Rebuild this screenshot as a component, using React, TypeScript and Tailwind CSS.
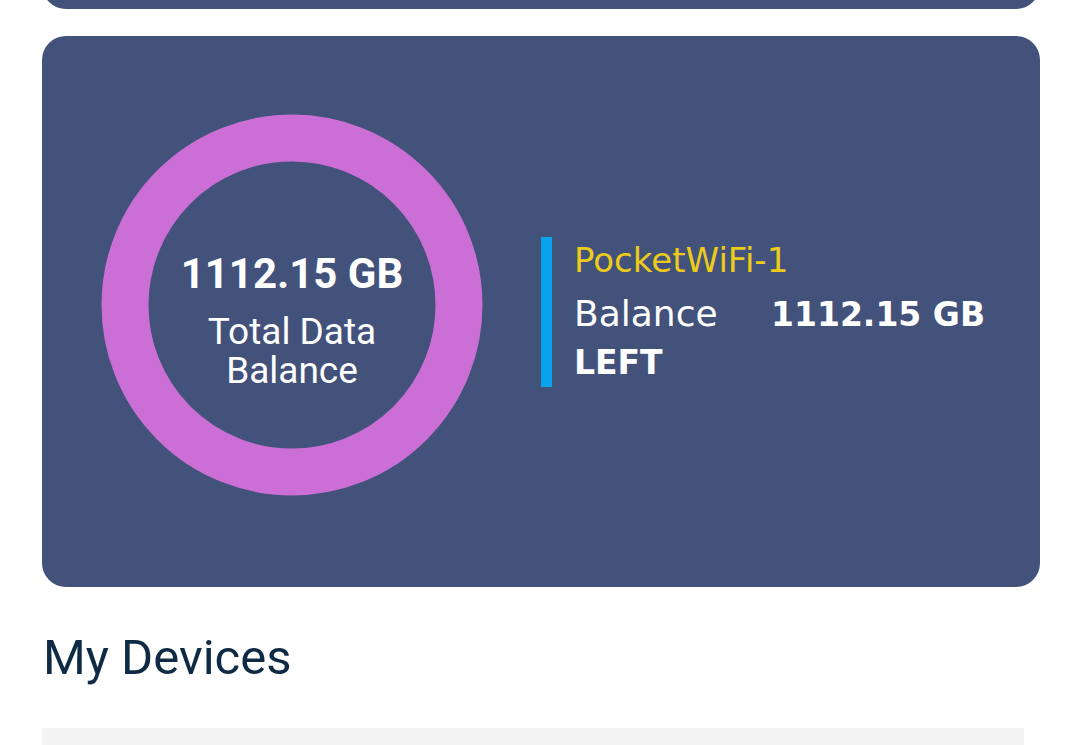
import React from 'react';

const Ring: React.FC = () => (
  <div className="relative w-[382px] h-[382px] shrink-0">
    <svg width="382" height="382" viewBox="0 0 382 382" className="absolute inset-0">
      <circle cx="191" cy="191" r="167" fill="none" stroke="#cb6fd7" strokeWidth="47" />
    </svg>
    <div className="absolute inset-0 flex flex-col items-center justify-center text-white font-['Roboto',sans-serif]">
      <div className="text-[42px] font-bold leading-[48px] mt-[30px]">1112.15 GB</div>
      <div className="text-[37px] leading-[39px] mt-[14px] text-center">
        Total Data
        <br />
        Balance
      </div>
    </div>
  </div>
);

export default function App() {
  return (
    <div className="w-[1071px] h-[745px] bg-white overflow-hidden relative font-['Roboto',sans-serif]">
      <div className="ml-[42px] mr-[31px] -mt-[40px] h-[49px] bg-[#42527a] rounded-[24px]" />

      <div className="ml-[42px] mr-[31px] mt-[27px] h-[551px] bg-[#42527a] rounded-[24px] flex items-center pl-[59px] pb-[14px]">
        <Ring />
        <div className="ml-[58px] mt-[14px] flex items-stretch">
          <div className="w-[11px] bg-[#08a3ec]" />
          <div className="pl-[22px] text-white font-['DejaVu_Sans',sans-serif]">
            <div className="text-[34px] leading-[44px] text-[#eccb1b] mt-[1px]">PocketWiFi-1</div>
            <div className="flex items-baseline leading-[48px] mt-[8px]">
              <span className="w-[197px] text-[36px]">Balance</span>
              <span className="font-bold text-[33px]">1112.15 GB</span>
            </div>
            <div className="text-[33px] leading-[48px] font-bold">LEFT</div>
          </div>
        </div>
      </div>

      <div className="mx-[43px] mt-[42px] text-[49px] leading-[58px] text-[#0f2a44] font-['Roboto',sans-serif]">
        My Devices
      </div>

      <div className="ml-[42px] w-[982px] mt-[41px] h-[40px] bg-[#f4f4f4]" />
    </div>
  );
}
